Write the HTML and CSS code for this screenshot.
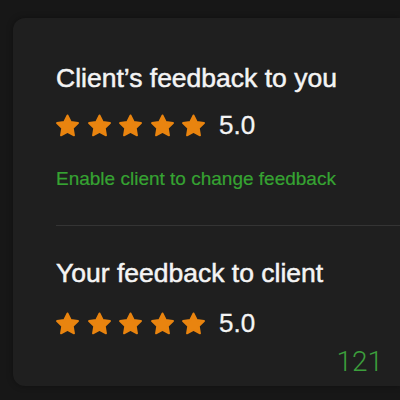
FILE: index.html
```html
<!doctype html>
<html lang="en">
<head>
  <meta charset="UTF-8">
  <meta name="viewport" content="width=device-width, initial-scale=1.0">
  <title>Feedback</title>
  <link rel="stylesheet" href="styles.css">
</head>
<body>
  <svg class="defs" width="0" height="0">
    <symbol id="star" viewBox="0 0 24 24">
      <path d="M12 1.5L15.41 8.31 22.94 9.45 17.52 14.79 18.76 22.3 12 18.8 5.24 22.3 6.48 14.79 1.06 9.45 8.59 8.31z" />
    </symbol>
  </svg>

  <div class="card">
    <section class="block">
      <h2 class="title">Client’s feedback to you</h2>
      <div class="rating">
        <div class="stars">
          <svg class="star"><use href="#star" /></svg>
          <svg class="star"><use href="#star" /></svg>
          <svg class="star"><use href="#star" /></svg>
          <svg class="star"><use href="#star" /></svg>
          <svg class="star"><use href="#star" /></svg>
        </div>
        <span class="score">5.0</span>
      </div>
      <a class="link" href="#">Enable client to change feedback</a>
    </section>

    <hr class="divider">

    <section class="block second">
      <h2 class="title">Your feedback to client</h2>
      <div class="rating">
        <div class="stars">
          <svg class="star"><use href="#star" /></svg>
          <svg class="star"><use href="#star" /></svg>
          <svg class="star"><use href="#star" /></svg>
          <svg class="star"><use href="#star" /></svg>
          <svg class="star"><use href="#star" /></svg>
        </div>
        <span class="score">5.0</span>
      </div>
    </section>

    <div class="count">121</div>
  </div>
</body>
</html>
```

FILE: styles.css
```css
html {
  overflow: hidden;
}
body {
  margin: 0;
  width: 400px;
  height: 400px;
  background: #171717;
  font-family: "Liberation Sans", Arial, sans-serif;
  color: #f4f4f4;
  padding: 18px 0 0 13px;
  box-sizing: border-box;
}
.defs {
  position: absolute;
}
/* card runs on past the right edge, so only the left corners are rounded */
.card {
  width: 387px;
  background: #1f1f1f;
  border-radius: 12px 0 0 12px;
  padding: 45px 0 8px 43px;
  box-sizing: border-box;
  box-shadow: 0 0 6px rgba(0, 0, 0, 0.35);
}
.title {
  margin: 0;
  font-size: 26.5px;
  line-height: 30px;
  font-weight: normal;
  -webkit-text-stroke: 0.5px #f4f4f4;
}
.rating {
  display: flex;
  align-items: center;
  height: 24px;
  margin-top: 20px;
}
.stars {
  display: flex;
  gap: 8.5px;
}
.star {
  width: 23px;
  height: 23px;
  fill: #e9840f;
  stroke: #e9840f;
  stroke-width: 2;
  stroke-linejoin: round;
}
.score {
  margin-left: 14px;
  font-size: 26px;
  line-height: 30px;
  -webkit-text-stroke: 0.3px #f4f4f4;
}
.link {
  display: block;
  margin-top: 31px;
  font-size: 19px;
  line-height: 22px;
  color: #36a332;
  text-decoration: none;
  -webkit-text-stroke: 0.2px #36a332;
}
.divider {
  margin: 35px 0 0;
  border: none;
  border-top: 1px solid #343434;
}
.second {
  margin-top: 32px;
}
.second .rating {
  margin-top: 23px;
}
.count {
  margin-top: 11px;
  padding-right: 17px;
  text-align: right;
  font-family: Roboto, sans-serif;
  font-weight: 300;
  font-size: 28px;
  line-height: 32px;
  color: #3c9f3c;
}
```
